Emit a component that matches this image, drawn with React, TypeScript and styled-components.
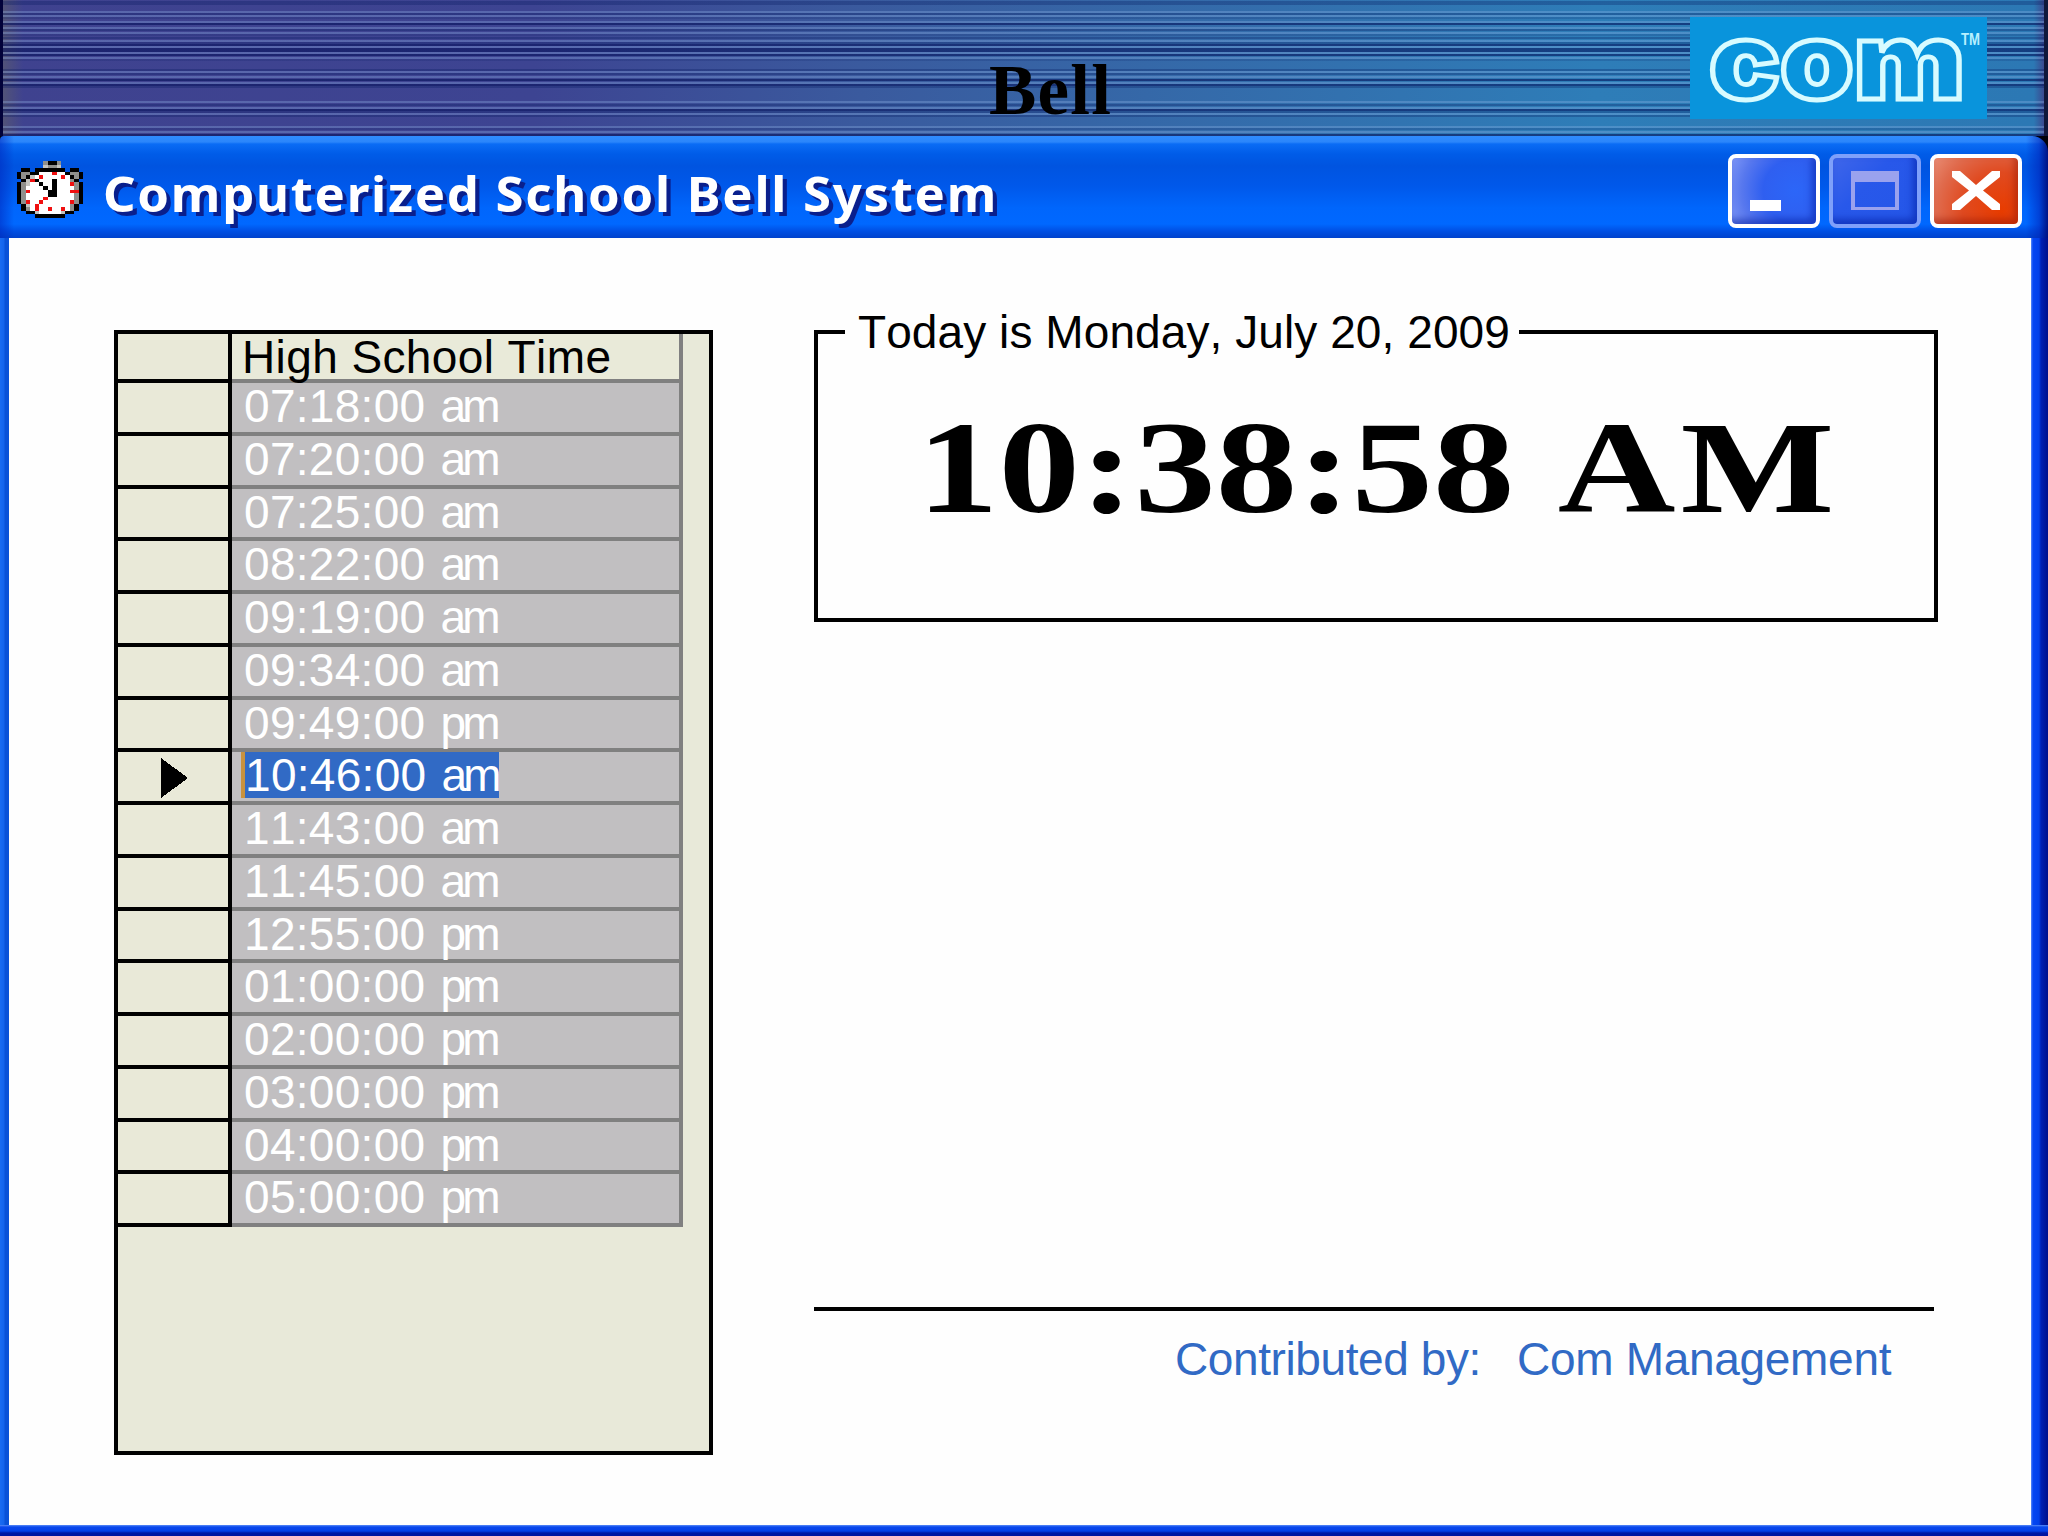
import React from 'react';
import styled, { createGlobalStyle } from 'styled-components';

const Global = createGlobalStyle`
  * { box-sizing: border-box; }
  html, body { margin: 0; padding: 0; background: #fff; }
`;

const Page = styled.div`
  width: 2048px;
  height: 1536px;
  display: flex;
  flex-direction: column;
  overflow: hidden;
  font-family: "Liberation Sans", Arial, sans-serif;
  font-kerning: none;
  background: #02020c;
`;

const stripes = [
  [1, 1], [3, 1], [11, 0], [13, 1], [15, 0], [17, 3], [21, 0], [23, 2], [27, 0], [29, 1], [32, 0], [34, 3], [37, 1], [40, 0], [42, 1],
  [44, 2], [46, 0], [48, 2], [50, 2], [52, 0], [54, 2], [57, 0], [59, 3], [69, 1], [71, 0], [73, 1], [76, 0],
  [79, 2], [82, 0], [84, 2], [86, 1], [101, 0], [104, 1], [107, 0], [109, 2], [111, 1], [113, 0], [115, 1],
  [126, 0], [128, 3], [131, 0], [134, 2],
];
const tones = ['rgba(150,185,235,.3)', 'rgba(0,20,90,.28)', 'rgba(0,12,85,.55)', 'rgba(0,20,90,.16)'];
const stripeImage = stripes
  .map(([y, t]) => `linear-gradient(${tones[t]}, ${tones[t]}) 0 ${y}px / 100% 2px no-repeat`)
  .join(', ');

const Banner = styled.header`
  height: 136px;
  flex: none;
  display: flex;
  justify-content: space-between;
  border-left: 3px solid #02023a;
  border-right: 4px solid #10183c;
  background: ${stripeImage},
    linear-gradient(90deg, rgba(90, 90, 110, .7) 0, rgba(90, 90, 110, 0) 20px),
    linear-gradient(90deg, #3f428f 0%, #3d4492 26%, #3a5a9e 42%, #3568a8 56%, #2e7db8 78%, #2c78b4 99.5%, #3a4a90 100%);
`;

const BannerTitle = styled.h1`
  margin: 0;
  padding: 50px 0 0 986px;
  font: bold 71px/80px "Liberation Serif", "Times New Roman", serif;
  letter-spacing: 1.2px;
  color: #000;
`;

const Logo = styled.div`
  width: 297px;
  height: 102px;
  margin: 17px 57px 0 0;
  background: #0994dc;
`;

const LogoArt = styled.svg`
  display: block;
  overflow: visible;
`;

const TitleBar = styled.div`
  height: 102px;
  flex: none;
  display: flex;
  align-items: flex-start;
  padding-left: 17px;
  border-radius: 4px 16px 0 0;
  background:
    linear-gradient(90deg, rgba(0, 40, 190, .55) 0, rgba(0, 60, 220, 0) 14px),
    linear-gradient(270deg, rgba(0, 10, 120, .9) 0, rgba(0, 30, 180, .5) 9px, rgba(0, 60, 220, 0) 22px),
    linear-gradient(180deg, #2f8cff 0, #2b86fb 6px, #0a6cf5 8px, #005ce8 18px, #0054e0 30px, #0058ea 50px, #0066fc 72px, #0068ff 88px, #0050e4 95px, #0042cc 102px);
`;

const ClockIcon = styled.svg`
  width: 66px;
  height: 57px;
  margin-top: 24.5px;
  flex: none;
`;

const WindowTitle = styled.div`
  margin: 22px 0 0 20px;
  flex: 1;
  font: bold 48px/72px "Noto Sans", sans-serif;
  letter-spacing: 1.6px;
  transform: scaleX(1.06);
  transform-origin: 0 0;
  white-space: nowrap;
  color: #fff;
  text-shadow: 4px 4px 0 #0a1f8c;
`;

const Buttons = styled.div`
  display: flex;
  gap: 9px;
  margin: 18px 26px 0 0;
`;

const WinButton = styled.button<{ $kind: 'min' | 'max' | 'close' }>`
  width: 92px;
  height: 74px;
  padding: 0;
  border: 4px solid ${p => (p.$kind === 'max' ? '#7fa0fa' : '#fff')};
  border-radius: 8px;
  background: ${p =>
    p.$kind === 'close'
      ? 'radial-gradient(circle at 80% 80%, #e83c00 0, #e04a20 45%, #e06a4c 75%, #ec9a84 110%)'
      : p.$kind === 'min'
        ? 'radial-gradient(circle at 75% 50%, #2c66f8 0, #2f5ff0 45%, #5878ee 75%, #8ea4fa 110%)'
        : 'linear-gradient(135deg, #3f66ea 0, #2858ea 40%, #2456e8 100%)'};
  box-shadow: inset -4px -5px 7px ${p => (p.$kind === 'close' ? 'rgba(150,20,0,.5)' : 'rgba(0,30,160,.55)')};
`;

const Glyph = styled.svg`
  display: block;
  width: 84px;
  height: 66px;
`;

const Frame = styled.div`
  flex: 1;
  display: flex;
  padding: 0 17px 11px 9px;
  background:
    linear-gradient(180deg, #5a8cf8 0, #0a48ec 2px, #0340e8 6px, #0018a4 8px, #0014a0 11px) 0 100% / 100% 11px no-repeat,
    linear-gradient(90deg, #1a6cf2 0, #1464ec 4px, #0a52d8 5px, #0a52d8 9px) 0 0 / 9px 100% no-repeat,
    linear-gradient(90deg, #5a8cf8 0, #0446f4 2px, #0240e8 8px, #0020b4 10px, #000f8c 17px) 100% 0 / 17px 100% no-repeat;
`;

const Client = styled.main`
  flex: 1;
  display: flex;
  align-items: flex-start;
  padding: 92px 0 0 105px;
  background: #fefefe;
`;

const Grid = styled.section`
  width: 599px;
  height: 1125px;
  border: 4px solid #000;
  background: #e8e9d9;
`;

const Row = styled.div<{ $head?: boolean }>`
  height: ${p => (p.$head ? 49 : 52.75)}px;
  width: 565px;
  display: flex;
`;

const RowHead = styled.div`
  width: 114px;
  border-right: 4px solid #000;
  border-bottom: 4px solid #000;
  background: #e9e9d8;
`;

const Cell = styled.div<{ $head?: boolean }>`
  flex: 1;
  padding-left: ${p => (p.$head ? 10 : 12)}px;
  border-right: 4px solid #808080;
  border-bottom: 4px solid #808080;
  background: ${p => (p.$head ? '#e9ead9' : '#c1bfc1')};
  color: ${p => (p.$head ? '#000' : '#fff')};
  font-size: 46px;
  line-height: 46px;
  letter-spacing: ${p => (p.$head ? 0.4 : 0.3)}px;
  white-space: pre;
`;

const Suffix = styled.span`
  margin-left: 2px;
  letter-spacing: -4px;
`;

const Selected = styled.span`
  display: inline-block;
  height: 46px;
  width: 258px;
  margin-left: -3px;
  border-left: 4px solid #c8923e;
  background: #316ac5;
`;

const Arrow = styled.svg`
  display: block;
  width: 27px;
  height: 40px;
  margin: 6px 0 0 43px;
  shape-rendering: crispEdges;
`;

const Side = styled.section`
  width: 1125px;
  height: 1125px;
  margin-left: 101px;
  display: flex;
  flex-direction: column;
  justify-content: space-between;
`;

const ClockBox = styled.fieldset`
  width: 1124px;
  height: 307px;
  min-width: 0;
  margin: -15px 0 0;
  padding: 0 0 0 27px;
  border: 4px solid #000;
`;

const Legend = styled.legend`
  height: 34px;
  width: 674px;
  padding: 0 0 0 13px;
  font-size: 46px;
  line-height: 34px;
  letter-spacing: 0.08px;
  white-space: nowrap;
`;

const Time = styled.div`
  margin: 44px 0 0 72px;
  font: bold 132px/150px "Liberation Serif", "Times New Roman", serif;
  transform: scaleX(1.235);
  transform-origin: 0 0;
  white-space: nowrap;
`;

const Meridiem = styled.span`
  margin-left: 2px;
  letter-spacing: 4px;
`;

const Credit = styled.footer`
  width: 1120px;
  height: 148px;
  border-top: 4px solid #000;
  padding: 21px 0 0 361px;
  font-size: 46px;
  line-height: 54px;
  letter-spacing: -0.4px;
  color: #316ac5;
  white-space: pre;
  display: flex;
`;

const CreditName = styled.span`
  margin-left: 36px;
  letter-spacing: -0.3px;
`;

const clockPixels = [
  '......GKKG.....',
  '......gGGg.....',
  '.KK.KKKKKKK.KK.',
  'KGGKKWWWRWWKGGK',
  'KGKgWRWWWWRWKGK',
  '.KgRKWWWKWWWGK.',
  'KGgWWKWWKWWWRGK',
  'KGWWWWKWKWWWWGK',
  'KGRWWWWKKWWWRRK',
  'KGWWWWWKKWWWWGK',
  'KGWWWWRWWWWWWGK',
  'KGRWWRWWWWWWRGK',
  '.KgWRWWWWWWWGK.',
  '.KGWRWWRWWRWGK.',
  '..KKgWWWWWgKK..',
  '....KKKKKKK....',
];
const pixelColor: Record<string, string> = { K: '#000', G: '#8f8f8c', g: '#c4c4c0', W: '#fff', R: '#f01010' };

const times = [
  '07:18:00 am', '07:20:00 am', '07:25:00 am', '08:22:00 am', '09:19:00 am', '09:34:00 am', '09:49:00 pm',
  '10:46:00 am', '11:43:00 am', '11:45:00 am', '12:55:00 pm', '01:00:00 pm', '02:00:00 pm', '03:00:00 pm',
  '04:00:00 pm', '05:00:00 pm',
];
const current = '10:46:00 am';

function BellTime({ value }: { value: string }) {
  return (
    <>
      {value.slice(0, 9)}
      <Suffix>{value.slice(9)}</Suffix>
    </>
  );
}

export default function App() {
  return (
    <Page>
      <Global />
      <Banner>
        <BannerTitle>Bell</BannerTitle>
        <Logo>
          <LogoArt width="297" height="102" viewBox="0 0 297 102">
            <text x="19" y="81.5" textLength="256" lengthAdjust="spacingAndGlyphs" fontFamily="Inter, sans-serif" fontWeight="900" fontSize="106" fill="none" stroke="#d8fbff" strokeWidth="4.8">com</text>
            <text x="271" y="28" textLength="19" lengthAdjust="spacingAndGlyphs" fontFamily="Liberation Sans, sans-serif" fontWeight="700" fontSize="17" fill="#b8f0ff">TM</text>
          </LogoArt>
        </Logo>
      </Banner>
      <TitleBar>
        <ClockIcon viewBox="0 0 15 16" preserveAspectRatio="none" shapeRendering="crispEdges">
          {clockPixels.flatMap((line, y) =>
            [...line].map((c, x) => c !== '.' && <rect key={`${x}-${y}`} x={x} y={y} width="1" height="1" fill={pixelColor[c]} />),
          )}
        </ClockIcon>
        <WindowTitle>Computerized School Bell System</WindowTitle>
        <Buttons>
          <WinButton $kind="min" aria-label="Minimize">
            <Glyph><rect x="18" y="42" width="31" height="11" fill="#fff" /></Glyph>
          </WinButton>
          <WinButton $kind="max" aria-label="Maximize">
            <Glyph><path d="M18 13H66V52H18ZM22 24V49H62V24Z" fill="#9aa2ee" fillRule="evenodd" /></Glyph>
          </WinButton>
          <WinButton $kind="close" aria-label="Close">
            <Glyph><path d="M18 13H26L42 27L58 13H66V19L49 32.5L66 46V52H58L42 38L26 52H18V46L35 32.5L18 19Z" fill="#fff" /></Glyph>
          </WinButton>
        </Buttons>
      </TitleBar>
      <Frame>
        <Client>
          <Grid>
            <Row $head>
              <RowHead />
              <Cell $head>High School Time</Cell>
            </Row>
            {times.map(t => (
              <Row key={t}>
                <RowHead>{t === current && <Arrow><path d="M0 0L27 20L0 40Z" /></Arrow>}</RowHead>
                <Cell>{t === current ? <Selected><BellTime value={t} /></Selected> : <BellTime value={t} />}</Cell>
              </Row>
            ))}
          </Grid>
          <Side>
            <ClockBox>
              <Legend>Today is Monday, July 20, 2009</Legend>
              <Time>10:38:58 <Meridiem>AM</Meridiem></Time>
            </ClockBox>
            <Credit>
              <span>Contributed by:</span>
              <CreditName>Com Management</CreditName>
            </Credit>
          </Side>
        </Client>
      </Frame>
    </Page>
  );
}
